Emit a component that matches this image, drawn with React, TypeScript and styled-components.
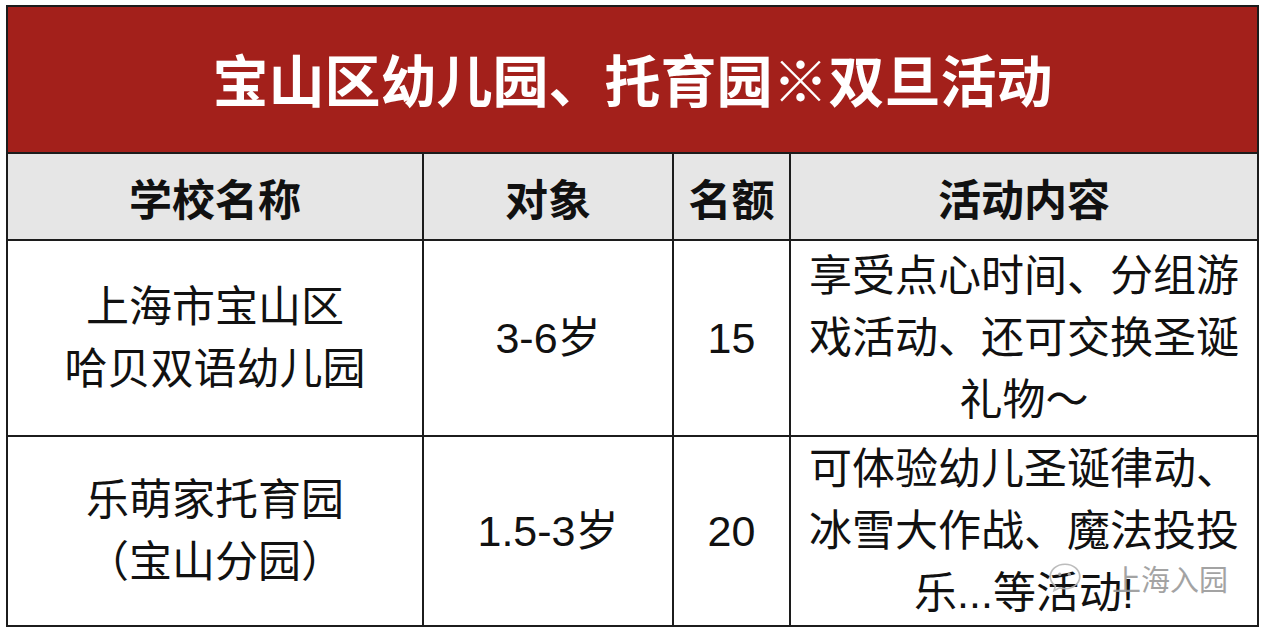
import React from 'react'
import styled, { createGlobalStyle } from 'styled-components'

const GlobalStyle = createGlobalStyle`
  html, body {
    margin: 0;
    background: #ffffff;
  }
  body {
    font-family: "Liberation Sans", "Noto Sans CJK SC", sans-serif;
    color: #111111;
  }
`

type Row = {
  school: string[]
  target: string
  quota: string
  content: string[]
}

const ROWS: Row[] = [
  {
    school: ['上海市宝山区', '哈贝双语幼儿园'],
    target: '3-6岁',
    quota: '15',
    content: ['享受点心时间、分组游', '戏活动、还可交换圣诞', '礼物～'],
  },
  {
    school: ['乐萌家托育园', '（宝山分园）'],
    target: '1.5-3岁',
    quota: '20',
    content: ['可体验幼儿圣诞律动、', '冰雪大作战、魔法投投', '乐...等活动!'],
  },
]

const HEADERS = ['学校名称', '对象', '名额', '活动内容']

const Page = styled.div`
  padding: 5px 7px 4px 6px;
`

const Table = styled.div`
  position: relative;
  display: grid;
  grid-template-columns: 414px 248px 115px 1fr;
  grid-template-rows: 145px 85px 194px 188px;
  gap: 2px;
  padding: 2px;
  background: #1c1c1c;
`

const TitleCell = styled.div`
  grid-column: 1 / -1;
  display: flex;
  align-items: center;
  justify-content: center;
  background: #a3201b;
  color: #ffffff;
  font-family: "Noto Sans CJK SC", sans-serif;
  font-size: 56px;
  font-weight: 700;
  padding-bottom: 4px;
`

const HeadCell = styled.div`
  display: flex;
  align-items: center;
  justify-content: center;
  background: #e6e6e6;
  font-family: "Noto Sans CJK SC", sans-serif;
  font-size: 43px;
  font-weight: 700;
  color: #111111;
`

const Cell = styled.div`
  display: flex;
  flex-direction: column;
  align-items: center;
  justify-content: center;
  background: #ffffff;
  font-size: 43px;
  line-height: 62px;
  text-align: center;
  white-space: nowrap;
`

const Line = styled.span`
  display: block;
`

const Watermark = styled.div`
  position: absolute;
  left: 1040px;
  top: 552px;
  display: flex;
  align-items: center;
  gap: 28px;
  color: #9a9a9a;
  font-family: "Noto Sans CJK SC", sans-serif;
  font-size: 29px;
  opacity: 0.9;
  pointer-events: none;
`

const Bubble = styled.svg`
  width: 38px;
  height: 36px;
`

const WechatIcon = () => (
  <Bubble viewBox="0 0 36 34" fill="none">
    <path
      d="M18 4C10 4 4 9.2 4 15.6c0 3.6 1.9 6.8 4.9 8.9L7.6 29l5.2-2.7c1.6.5 3.4.8 5.2.8 8 0 14-5.2 14-11.5S26 4 18 4z"
      stroke="#b5b5b5"
      strokeWidth="1.6"
    />
    <circle cx="13" cy="13.5" r="1.6" fill="#a8a8a8" />
    <circle cx="22" cy="13.5" r="1.6" fill="#a8a8a8" />
  </Bubble>
)

export default function App() {
  return (
    <Page>
      <GlobalStyle />
      <Table>
        <TitleCell>宝山区幼儿园、托育园※双旦活动</TitleCell>
        {HEADERS.map((h) => (
          <HeadCell key={h}>{h}</HeadCell>
        ))}
        {ROWS.map((row) => (
          <React.Fragment key={row.quota}>
            <Cell>
              {row.school.map((l) => (
                <Line key={l}>{l}</Line>
              ))}
            </Cell>
            <Cell>{row.target}</Cell>
            <Cell>{row.quota}</Cell>
            <Cell>
              {row.content.map((l) => (
                <Line key={l}>{l}</Line>
              ))}
            </Cell>
          </React.Fragment>
        ))}
        <Watermark>
          <WechatIcon />
          <span>上海入园</span>
        </Watermark>
      </Table>
    </Page>
  )
}
